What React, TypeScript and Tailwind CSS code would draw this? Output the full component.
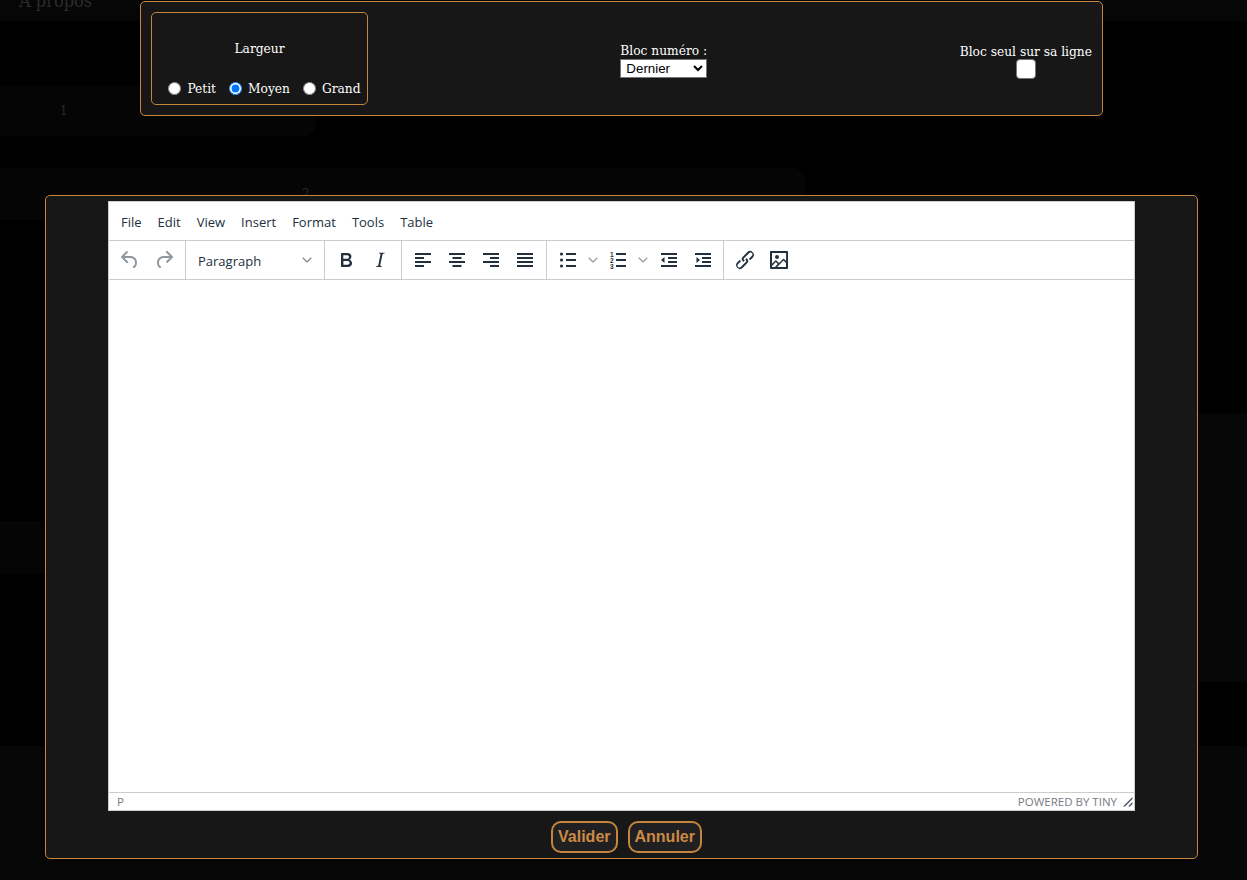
import { ChevronDown } from 'lucide-react';

const ACCENT = 'border-[#c6853f]';

const icons: Record<string, string> = {
  undo: 'M6.4 8H12c3.7 0 6.2 2 6.8 5.1.6 2.7-.4 5.6-2.3 6.8a1 1 0 01-1-1.8c1.1-.6 1.8-2.7 1.4-4.6-.5-2.1-2.1-3.5-4.9-3.5H6.4l3.3 3.3a1 1 0 11-1.4 1.4l-5-5a1 1 0 010-1.4l5-5a1 1 0 011.4 1.4L6.4 8z',
  redo: 'M17.6 10H12c-2.8 0-4.4 1.4-4.9 3.5-.4 2 .3 4 1.4 4.6a1 1 0 11-1 1.8c-2-1.2-2.9-4.1-2.3-6.8.6-3 3-5.1 6.8-5.1h5.6l-3.3-3.3a1 1 0 111.4-1.4l5 5a1 1 0 010 1.4l-5 5a1 1 0 01-1.4-1.4l3.3-3.3z',
  bold: 'M7.8 19c-.3 0-.5 0-.6-.2l-.2-.5V5.7c0-.2 0-.4.2-.5l.6-.2h5c1.5 0 2.7.3 3.5 1 .7.6 1.1 1.4 1.1 2.5a3 3 0 01-.6 1.9c-.4.6-1 1-1.6 1.2.4.1.9.3 1.3.6s.8.7 1 1.2c.4.4.5 1 .5 1.6 0 1.3-.4 2.3-1.3 3-.8.7-2.1 1-3.8 1H7.8zm5-8.3c.6 0 1.2-.1 1.6-.5.4-.3.6-.7.6-1.3 0-1.1-.8-1.7-2.3-1.7H9.3v3.5h3.4zm.5 6c.7 0 1.3-.1 1.7-.4.4-.4.6-.9.6-1.5s-.2-1-.7-1.4c-.4-.3-1-.4-2-.4H9.4v3.8h4z',
  italic: 'M16.7 4.7l-.1.9h-.3c-.6 0-1 0-1.4.3-.3.3-.4.6-.5 1.1l-2.1 9.8v.6c0 .5.4.8 1.4.8h.2l-.2.8H8l.2-.8h.2c1.1 0 1.8-.5 2-1.5l2-9.8.1-.5c0-.6-.4-.8-1.4-.8h-.3l.2-.9h5.8z',
  left: 'M4 5h16v2H4zM4 9h9v2H4zM4 13h16v2H4zM4 17h9v2H4z',
  center: 'M4 5h16v2H4zM7.5 9h9v2h-9zM4 13h16v2H4zM7.5 17h9v2h-9z',
  right: 'M4 5h16v2H4zM11 9h9v2h-9zM4 13h16v2H4zM11 17h9v2h-9z',
  justify: 'M4 5h16v2H4zM4 9h16v2H4zM4 13h16v2H4zM4 17h16v2H4z',
  outdent: 'M4 5h16v2H4zM11 9h9v2h-9zM11 13h9v2h-9zM4 17h16v2H4zM4 12l3.5-3v6z',
  indent: 'M4 5h16v2H4zM11 9h9v2h-9zM11 13h9v2h-9zM4 17h16v2H4zM9 12l-3.5-3v6z',
  link: 'M6.2 12.3a1 1 0 011.4 1.4l-2.1 2.1a2 2 0 102.7 2.7l4.8-4.8a1 1 0 000-1.4 1 1 0 111.4-1.3 2.9 2.9 0 010 4L9.6 20a3.9 3.9 0 01-5.5-5.5l2-2zm11.6-.6a1 1 0 01-1.4-1.4l2-2a2 2 0 10-2.6-2.8L11 10.3a1 1 0 000 1.4A1 1 0 119.6 13a2.9 2.9 0 010-4L14.4 4a3.9 3.9 0 015.5 5.5l-2 2z',
  image: 'M5 15.7l3.3-3.2c.3-.3.7-.3 1 0L12 15l4.1-4c.3-.4.8-.4 1 0l2 1.9V5H5v10.7zM5 18V19h3l2.8-2.9-2-2L5 17.9zm14-3l-2.5-2.4-6.4 6.5H19v-4zM4 3h16c.6 0 1 .4 1 1v16c0 .6-.4 1-1 1H4a1 1 0 01-1-1V4c0-.6.4-1 1-1zm6 8a2 2 0 100-4 2 2 0 000 4z',
};

function ToolIcon({ name, muted }: { name: string; muted?: boolean }) {
  return (
    <span className="flex h-[34px] w-[34px] items-center justify-center">
      <svg width="24" height="24" viewBox="0 0 24 24" fillRule="evenodd" className={muted ? 'fill-[#222f3e]/50' : 'fill-[#222f3e]'}>
        <path d={icons[name]} />
      </svg>
    </span>
  );
}

function BulletIcon() {
  return (
    <span className="flex h-[34px] w-[34px] items-center justify-center">
      <svg width="24" height="24" viewBox="0 0 24 24" className="fill-[#222f3e]">
        <circle cx="5.5" cy="6" r="1.6" />
        <circle cx="5.5" cy="12" r="1.6" />
        <circle cx="5.5" cy="18" r="1.6" />
        <path d="M10 5h10v2H10zM10 11h10v2H10zM10 17h10v2H10z" />
      </svg>
    </span>
  );
}

function NumberIcon() {
  return (
    <span className="flex h-[34px] w-[34px] items-center justify-center">
      <svg width="24" height="24" viewBox="0 0 24 24" className="fill-[#222f3e]">
        <text x="4" y="8.5" fontSize="6.5" fontWeight="700" fontFamily="Liberation Sans">1</text>
        <text x="4" y="14.5" fontSize="6.5" fontWeight="700" fontFamily="Liberation Sans">2</text>
        <text x="4" y="20.5" fontSize="6.5" fontWeight="700" fontFamily="Liberation Sans">3</text>
        <path d="M10 5h10v2H10zM10 11h10v2H10zM10 17h10v2H10z" />
      </svg>
    </span>
  );
}

function Caret() {
  return (
    <span className="flex h-[34px] w-4 items-center justify-center">
      <ChevronDown size={16} strokeWidth={1.6} className="text-[#222f3e]/50" />
    </span>
  );
}

const menus = ['File', 'Edit', 'View', 'Insert', 'Format', 'Tools', 'Table'];

function Editor() {
  return (
    <div className="flex h-[610px] w-[1027px] flex-col border border-[#cccccc] bg-white font-['Open_Sans',sans-serif] text-[#222f3e]">
      <div className="flex h-[39px] items-center gap-4 border-b border-[#cccccc] pl-3 pt-1 text-[13px]">
        {menus.map((m) => (
          <span key={m}>{m}</span>
        ))}
      </div>
      <div className="flex h-[39px] items-center border-b border-[#cccccc]">
        <div className="flex h-full w-[76px] items-center pl-1">
          <ToolIcon name="undo" muted />
          <ToolIcon name="redo" muted />
        </div>
        <div className="flex h-full w-[139px] items-center justify-between border-l border-[#cccccc] pl-3 pr-[9px] text-[13px]">
          <span className="pt-1">Paragraph</span>
          <ChevronDown size={16} strokeWidth={1.6} className="text-[#222f3e]/60" />
        </div>
        <div className="flex h-full items-center border-l border-[#cccccc] px-1">
          <ToolIcon name="bold" />
          <ToolIcon name="italic" />
        </div>
        <div className="flex h-full items-center border-l border-[#cccccc] px-1">
          <ToolIcon name="left" />
          <ToolIcon name="center" />
          <ToolIcon name="right" />
          <ToolIcon name="justify" />
        </div>
        <div className="flex h-full items-center border-l border-[#cccccc] pl-1 pr-[3px]">
          <BulletIcon />
          <Caret />
          <NumberIcon />
          <Caret />
          <span className="w-px" />
          <ToolIcon name="outdent" />
          <ToolIcon name="indent" />
        </div>
        <div className="flex h-full items-center border-l border-[#cccccc] px-1">
          <ToolIcon name="link" />
          <ToolIcon name="image" />
        </div>
      </div>
      <div className="flex-1" />
      <div className="flex h-[18px] items-center justify-between border-t border-[#cccccc] pl-2 text-[11.5px] text-[#767b82]">
        <span>P</span>
        <div className="flex items-center gap-[5px]">
          <span>POWERED BY TINY</span>
          <svg width="12" height="12" viewBox="0 0 12 12" className="fill-[#4a5563]">
            <path d="M1 10.5L10.5 1v2L3 10.5zM6 10.5L10.5 6v2L8 10.5z" />
          </svg>
        </div>
      </div>
    </div>
  );
}

function Radio({ label, checked }: { label: string; checked?: boolean }) {
  return (
    <label className="flex items-center gap-[6px]">
      <input type="radio" name="largeur" defaultChecked={checked} className="h-[13px] w-[13px]" />
      <span>{label}</span>
    </label>
  );
}

export default function App() {
  return (
    <div className="relative h-[880px] overflow-hidden bg-black font-['DejaVu_Serif_Condensed','DejaVu_Serif',serif] text-white">
      {/* page dimmed behind the modals */}
      <div className="flex h-full flex-col border-t border-[#c8c8c8] text-[#2b2b2b]">
        <div className="-mt-[13px] h-[33px] shrink-0 bg-[#060606] pl-[19px] text-[18px] leading-[25px]">À propos</div>
        <div className="mt-[65px] flex h-[50px] w-[316px] shrink-0 items-center rounded-br-xl bg-[#050505] pl-[60px] text-[13px]">1</div>
        <div className="mt-[32px] h-[52px] w-[805px] shrink-0 rounded-tr-xl bg-[#050505] pl-[302px] pt-[16px] text-[13px]">2</div>
        <div className="mt-[193px] flex h-[269px] shrink-0 justify-between">
          <div className="mt-[108px] h-[53px] w-[400px] bg-[#050505]" />
          <div className="h-full w-[300px] bg-[#060606]" />
        </div>
        <div className="mt-[64px] flex-1 bg-[#060606]" />
      </div>

      <div className={`absolute left-[140px] top-[1px] flex h-[115px] w-[963px] items-center justify-between rounded-[5px] border ${ACCENT} bg-[#171717] px-[10px] text-[13.6px]`}>
        <div className={`flex h-[93px] w-[217px] flex-col items-center justify-between rounded-[5px] border ${ACCENT} pb-[5px] pt-[24px]`}>
          <span className="leading-[22px]">Largeur</span>
          <div className="flex items-center gap-[13px] pl-[10px] leading-[22px]">
            <Radio label="Petit" />
            <Radio label="Moyen" checked />
            <Radio label="Grand" />
          </div>
        </div>
        <div className="mt-[1px] flex flex-col leading-[18px]">
          <span>Bloc numéro :</span>
          <select defaultValue="Dernier" className="h-[19px] w-[87px] border border-[#767676] bg-white pl-[1px] font-['Liberation_Sans',sans-serif] text-[13.33px] text-black">
            <option>Dernier</option>
          </select>
        </div>
        <div className="mt-[4px] flex flex-col items-center leading-[16px]">
          <span>Bloc seul sur sa ligne</span>
          <input type="checkbox" className="h-5 w-5 appearance-none rounded-[4px] border border-[#767676] bg-white" />
        </div>
      </div>

      <div className={`absolute left-[45px] top-[195px] flex h-[664px] w-[1153px] flex-col items-center rounded-[5px] border ${ACCENT} bg-[#171717] pt-[5px]`}>
        <Editor />
        <div className="mt-[10px] flex font-['Liberation_Sans',sans-serif] text-[16px] font-bold text-[#cb8a45]">
          <button className={`mr-[10px] h-[32px] rounded-[10px] border-2 ${ACCENT} bg-[#202022] px-[5px]`}>Valider</button>
          <button className={`mr-[-10px] h-[32px] rounded-[10px] border-2 ${ACCENT} bg-[#202022] px-[5px]`}>Annuler</button>
        </div>
      </div>
    </div>
  );
}
